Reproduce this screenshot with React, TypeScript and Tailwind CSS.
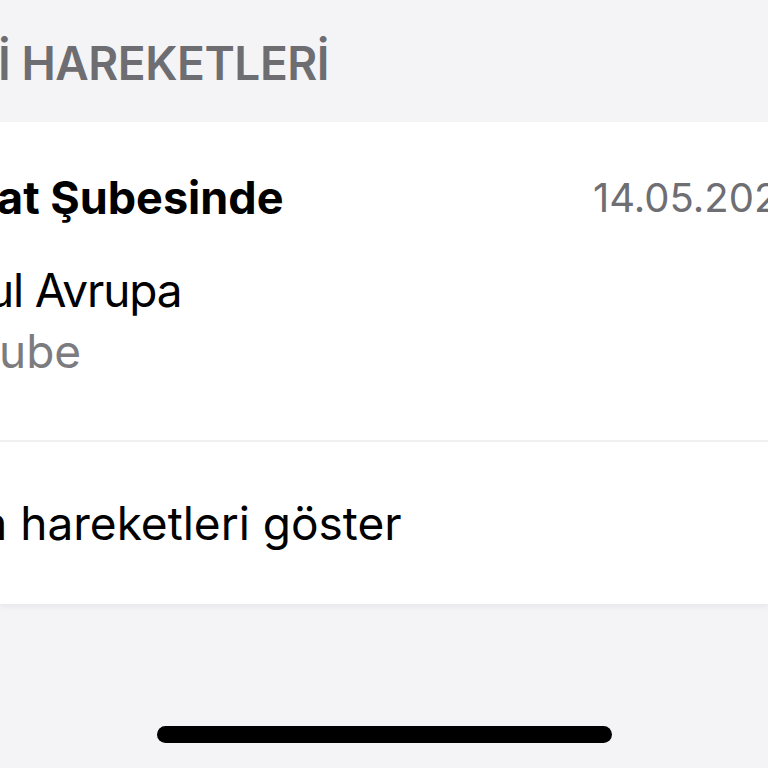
export default function App() {
  return (
    <div
      className="w-[768px] h-[768px] overflow-hidden bg-[#f4f4f6] flex flex-col"
      style={{ fontFamily: "Inter, 'Noto Sans', sans-serif" }}
    >
      {/* Section header */}
      <div className="pt-[40px] h-[122px] whitespace-nowrap">
        <div className="-ml-[2px] text-[46px] leading-none font-semibold text-[#6d6d72] tracking-[-0.01em]">
          İ HAREKETLERİ
        </div>
      </div>

      {/* Card */}
      <div className="bg-white shadow-[0_3px_6px_rgba(0,0,0,0.05)] whitespace-nowrap">
        <div className="flex pt-[49px] pb-[63px]">
          <div className="flex-1 min-w-0 flex flex-col">
            <div className="-ml-[3px] text-[45px] leading-[54px] font-bold text-black">
              at Şubesinde
            </div>
            <div className="mt-[38px] -ml-[13px] text-[46px] leading-[54px] text-black tracking-tight">
              ul Avrupa
            </div>
            <div className="mt-[8px] -ml-[1px] text-[46px] leading-[52px] text-[#7c7c80]">
              ube
            </div>
          </div>
          <div className="w-[175px] shrink-0 text-[40px] leading-[54px] text-[#6e6e73]">
            14.05.2024
          </div>
        </div>
        <div className="h-[2px] bg-[#f0f0f2]" />
        <div className="h-[162px] flex items-center">
          <div className="-ml-[33px] text-[46px] leading-[54px] text-black">
            m hareketleri göster
          </div>
        </div>
      </div>

      {/* Home indicator */}
      <div className="mt-[122px] mx-auto w-[455px] h-[17px] rounded-full bg-black" />
    </div>
  );
}
